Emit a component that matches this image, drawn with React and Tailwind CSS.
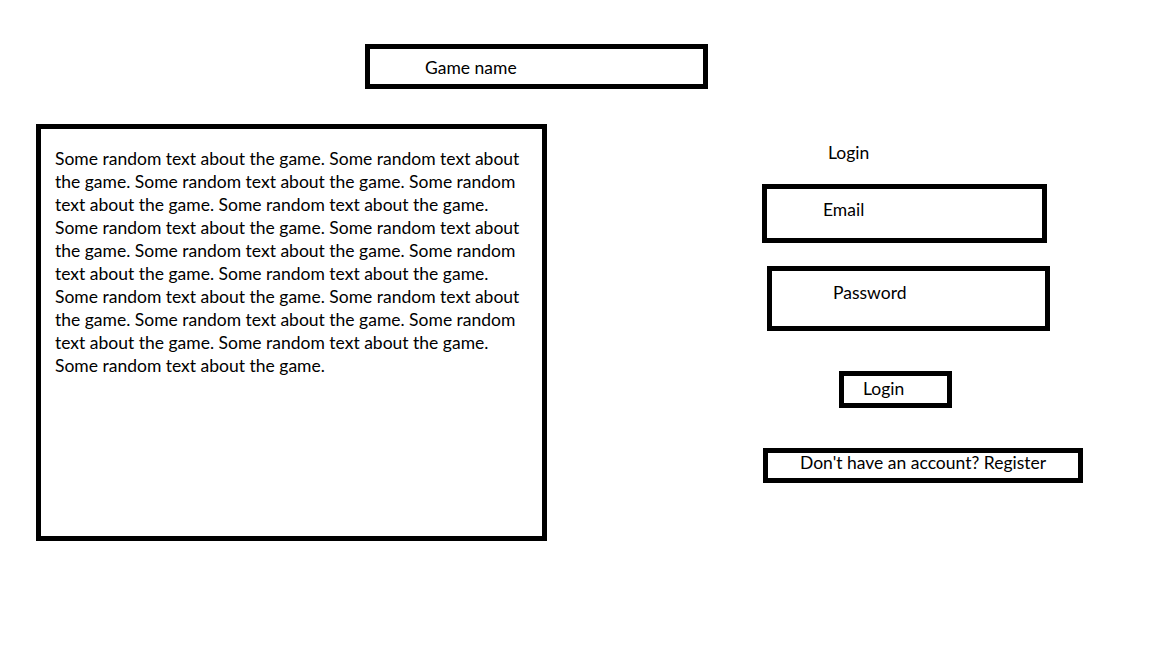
export default function App() {
  const lines = [
    "Some random text about the game. Some random text about",
    "the game. Some random text about the game. Some random",
    "text about the game. Some random text about the game.",
    "Some random text about the game. Some random text about",
    "the game. Some random text about the game. Some random",
    "text about the game. Some random text about the game.",
    "Some random text about the game. Some random text about",
    "the game. Some random text about the game. Some random",
    "text about the game. Some random text about the game.",
    "Some random text about the game.",
  ];
  return (
    <div
      className="w-[1152px] h-[648px] bg-white text-black text-[17.5px] leading-[23px] overflow-hidden"
      style={{ fontFamily: "Lato, 'Open Sans', sans-serif" }}
    >
      <div className="pt-[44px] pl-[365px]">
        <div className="w-[343px] h-[45px] border-[5px] border-black flex items-center pl-[55px] pt-[1px]">
          Game name
        </div>
      </div>
      <div className="flex mt-[35px]">
        <div className="ml-[36px] w-[511px] h-[417px] border-[5px] border-black pl-[14px] pt-[18px]">
          {lines.map((l, i) => (
            <div key={i} className="whitespace-nowrap">{l}</div>
          ))}
        </div>
        <div className="ml-[215px] flex flex-col items-start">
          <div className="mt-[16.5px] pl-[66px]">Login</div>
          <div className="mt-[20.5px] w-[285px] h-[59px] border-[5px] border-black pl-[56px] pt-[9px]">
            Email
          </div>
          <div className="mt-[23px] ml-[5px] w-[283px] h-[65px] border-[5px] border-black pl-[61px] pt-[9.5px]">
            Password
          </div>
          <div className="mt-[40px] ml-[77px] w-[113px] h-[37px] border-[5px] border-black pl-[19px] pb-[2px] flex items-center">
            Login
          </div>
          <div className="mt-[40px] ml-[1px] w-[320px] h-[35px] border-[5px] border-black pl-[32px] leading-[20px] pt-0">
            Don't have an account? Register
          </div>
        </div>
      </div>
    </div>
  );
}
